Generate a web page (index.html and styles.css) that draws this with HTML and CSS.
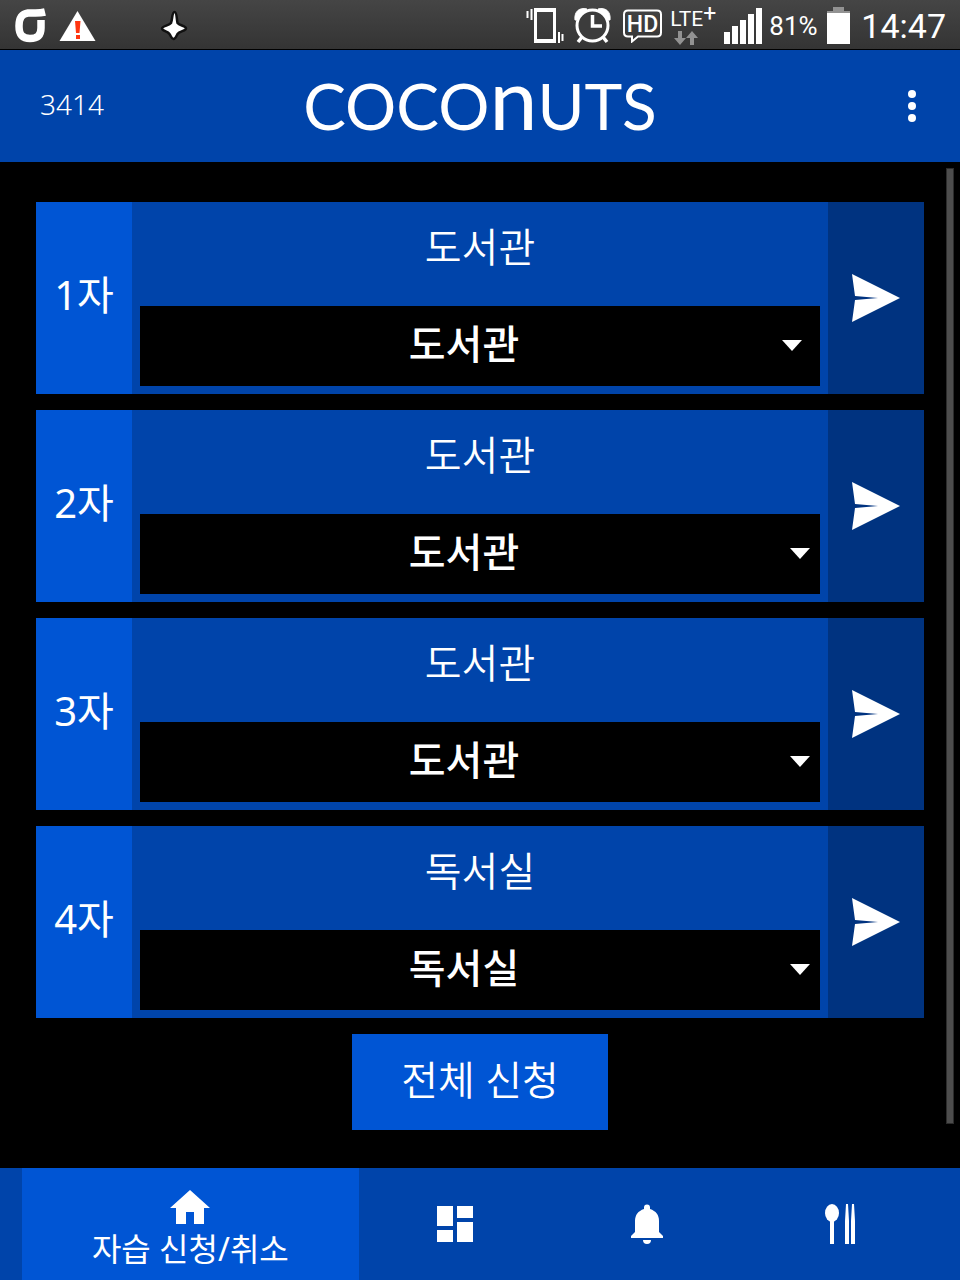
FILE: index.html
```html
<!DOCTYPE html>
<html lang="ko">
<head>
<meta charset="utf-8">
<meta name="viewport" content="width=device-width, initial-scale=1">
<title>Coconuts</title>
<link rel="stylesheet" href="styles.css">
</head>
<body>
<div class="status">
  <div class="status-left">
    <svg width="32" height="36" viewBox="0 0 32 36" aria-hidden="true"><path d="M31 4C23 6 18 4.500 14 5C7.500 6 5 10 5 18C5 27 8.500 30.500 16 30.500C23.500 30.500 27 27 27 20V12" fill="none" stroke="#fff" stroke-width="7.500"/></svg>
    <svg width="37" height="32" viewBox="0 0 37 32" aria-hidden="true"><path d="M18.500 1L36.500 31H0.500Z" fill="#fff"/><path d="M16 11h5.500l-1 12h-3.500zM17 25h4v4h-4z" fill="#ff3510"/></svg>
    <svg class="spark" width="28" height="32" viewBox="0 0 28 32" aria-hidden="true"><path d="M14.500 2C17 2 16.500 9 17.500 13C19.500 15.500 26 16 26 18.500C26 21 19.500 21 17.500 24C16.500 26 15.500 29 13.500 29C11.500 29 11 26 9.500 24C7.500 21 2 21 2 18.500C2 16 9 15.500 11 13C12.500 9 12 2 14.500 2Z" fill="#fff" stroke="#111" stroke-width="2.500"/></svg>
  </div>
  <div class="status-right">
    <svg width="38" height="36" viewBox="0 0 38 36" aria-hidden="true"><path d="M1.500 3v7M5.500 1v11M33 24v11M36.500 26v7" stroke="#fff" stroke-width="2"/><path d="M8 0h22v35H8zM11 4v27h16V4z" fill="#fff" fill-rule="evenodd"/></svg>
    <svg class="alarm" width="37" height="37" viewBox="0 0 37 37" aria-hidden="true"><path d="M1 13C0 5 5 0 13 2L3 13zM36 13C37 5 32 0 24 2L34 13z" fill="#fff" stroke="#fff"/><circle cx="18.500" cy="18.500" r="15.500" fill="#3c3c3c" stroke="#fff" stroke-width="3"/><path d="M18.500 8v11h9.500M8 30l-4 5M29 30l4 5" fill="none" stroke="#fff" stroke-width="3.500"/></svg>
    <svg class="hd" width="39" height="34" viewBox="0 0 39 34" aria-hidden="true"><path d="M5 1.500h29q4 0 4 4v18q0 4-4 4H15l-6 5v-5H5q-4 0-4-4v-18q0-4 4-4z" fill="none" stroke="#fff" stroke-width="2"/><text class="hd-text" x="19.500" y="23" text-anchor="middle">HD</text></svg>
    <div class="lte"><span class="lte-name">LTE<sup>+</sup></span><svg width="24" height="14" viewBox="0 0 24 14" aria-hidden="true"><path d="M4 0h4v7h4l-6 7-6-7h4zM16 14h4V7h4l-6-7-6 7h4z" fill="#929292"/></svg></div>
    <svg class="signal" width="38" height="36" viewBox="0 0 38 36" aria-hidden="true"><path d="M0 24h6v12H0zM8 18h6v18H8zM16 12h6v24h-6zM24 6h6v30h-6zM32 0h6v36h-6z" fill="#fff"/></svg>
    <span class="percent">81%</span>
    <svg width="23" height="37" viewBox="0 0 23 37" aria-hidden="true"><path d="M6 0h11v4h6v3H0V4h6z" fill="#929292"/><path d="M0 6h23v31H0z" fill="#fff"/></svg>
    <time class="clock">14:47</time>
  </div>
</div>
<header class="header">
  <span class="student">3414</span>
  <h1 class="logo">COCO<span class="logo-n">n</span>UTS</h1>
  <button class="more" type="button" aria-label="메뉴"><svg width="8" height="32" viewBox="0 0 8 32"><g fill="#fff"><circle cx="4" cy="4" r="4"/><circle cx="4" cy="16" r="4"/><circle cx="4" cy="28" r="4"/></g></svg></button>
</header>
<main class="main">
  <section class="row">
    <label class="period" for="p1">1자</label>
    <div class="detail"><p class="current">도서관</p><div class="picker"><select id="p1"><option>도서관</option><option>독서실</option></select><svg class="caret caret-inset" width="20" height="11" viewBox="0 0 20 11"><path d="M0 0h20L10 11z" fill="#fff"/></svg></div></div>
    <button class="send" type="button" aria-label="1자 신청"><svg width="48" height="48" viewBox="0 0 48 48"><path d="M0 0L48 24L0 48L3 26L26 24L3 22Z" fill="#fff"/></svg></button>
  </section>
  <section class="row">
    <label class="period" for="p2">2자</label>
    <div class="detail"><p class="current">도서관</p><div class="picker"><select id="p2"><option>도서관</option><option>독서실</option></select><svg class="caret" width="20" height="11" viewBox="0 0 20 11"><path d="M0 0h20L10 11z" fill="#fff"/></svg></div></div>
    <button class="send" type="button" aria-label="2자 신청"><svg width="48" height="48" viewBox="0 0 48 48"><path d="M0 0L48 24L0 48L3 26L26 24L3 22Z" fill="#fff"/></svg></button>
  </section>
  <section class="row">
    <label class="period" for="p3">3자</label>
    <div class="detail"><p class="current">도서관</p><div class="picker"><select id="p3"><option>도서관</option><option>독서실</option></select><svg class="caret" width="20" height="11" viewBox="0 0 20 11"><path d="M0 0h20L10 11z" fill="#fff"/></svg></div></div>
    <button class="send" type="button" aria-label="3자 신청"><svg width="48" height="48" viewBox="0 0 48 48"><path d="M0 0L48 24L0 48L3 26L26 24L3 22Z" fill="#fff"/></svg></button>
  </section>
  <section class="row">
    <label class="period" for="p4">4자</label>
    <div class="detail"><p class="current">독서실</p><div class="picker"><select id="p4"><option>독서실</option><option>도서관</option></select><svg class="caret" width="20" height="11" viewBox="0 0 20 11"><path d="M0 0h20L10 11z" fill="#fff"/></svg></div></div>
    <button class="send" type="button" aria-label="4자 신청"><svg width="48" height="48" viewBox="0 0 48 48"><path d="M0 0L48 24L0 48L3 26L26 24L3 22Z" fill="#fff"/></svg></button>
  </section>
  <button class="apply-all" type="button">전체 신청</button>
  <div class="scrollbar"></div>
</main>
<nav class="tabs">
  <a class="tab tab-active" href="#apply"><svg width="40" height="34" viewBox="0 0 40 34" aria-hidden="true"><path d="M20 0L40 18H34V34H24V22H16V34H6V18H0Z" fill="#fff"/></svg><span>자습 신청/취소</span></a>
  <a class="tab" href="#board" aria-label="게시판"><svg width="36" height="36" viewBox="0 0 36 36"><path d="M0 0h16v20H0zM20 0h16v12H20zM0 24h16v12H0zM20 16h16v20H20z" fill="#fff"/></svg></a>
  <a class="tab" href="#alerts" aria-label="알림"><svg width="32" height="40" viewBox="0 0 32 40"><path d="M13 5V3.500a3 3 0 0 1 6 0V5C25 7 28 11 28 17V28L32 32V34H0V32L4 28V17C4 11 7 7 13 5ZM12 36h8a4 4 0 0 1-8 0z" fill="#fff"/></svg></a>
  <a class="tab" href="#meals" aria-label="급식"><svg width="30" height="40" viewBox="0 0 30 40"><ellipse cx="7" cy="9" rx="7" ry="9" fill="#fff"/><path d="M5 16h4v24H5zM21 0h2l1 17v23h-4V17zM27 0h2l1 17v23h-4V17z" fill="#fff"/></svg></a>
</nav>
</body>
</html>
```
FILE: styles.css
```css
* { box-sizing: border-box; }
body {
  margin: 0;
  min-height: 100vh;
  display: flex;
  flex-direction: column;
  background: #000;
  color: #fff;
  font-family: "Noto Sans", "Noto Sans CJK KR", sans-serif;
}
svg { display: block; flex: none; }
button { border: 0; padding: 0; color: inherit; font: inherit; cursor: pointer; }

.status {
  height: 50px;
  display: flex;
  justify-content: space-between;
  padding: 2px 14px 0;
  background: linear-gradient(#454545, #343434);
  border-bottom: 1px solid #000;
  font-family: Roboto, sans-serif;
}
.status-left, .status-right { display: flex; align-items: center; }
.status-left { gap: 13px; }
.spark { margin-left: 51px; }
.alarm { margin-left: 10px; }
.hd { margin-left: 12px; }
.hd-text { font: 500 23px Roboto, sans-serif; fill: #fff; }
.lte { margin-left: 8px; width: 48px; }
.lte svg { margin-left: 4px; }
.lte-name { display: block; font-size: 21px; line-height: 24px; white-space: nowrap; }
.lte-name sup { font-size: 23px; line-height: 0; vertical-align: 5px; }
.signal { margin: 0 7px 0 6px; }
.percent { width: 58px; font-size: 26px; }
.clock { margin-left: 11px; font-size: 34px; }

.header {
  height: 112px;
  display: grid;
  grid-template-columns: 1fr auto 1fr;
  align-items: center;
  padding: 0 40px;
  background: #0044aa;
}
.student { padding-bottom: 4px; font-size: 28px; font-weight: 300; }
.logo {
  margin: 0;
  font-family: Lato, sans-serif;
  font-size: 64px;
  font-weight: 400;
  line-height: 80px;
}
.logo-n { font-size: 86px; line-height: 0; }
.more { justify-self: end; background: none; padding: 8px 4px; }

.main {
  flex: 1;
  position: relative;
  display: flex;
  flex-direction: column;
  gap: 16px;
  padding: 40px 36px 38px;
}
.row { display: grid; grid-template-columns: 96px 1fr 96px; }
.period {
  display: flex;
  align-items: center;
  justify-content: center;
  padding-bottom: 10px;
  background: #0055d4;
  font-size: 40px;
}
.detail { padding: 0 8px 8px; background: #0044aa; }
.current {
  margin: 0;
  padding-bottom: 14px;
  font-size: 40px;
  font-weight: 350;
  line-height: 90px;
  text-align: center;
}
.picker { position: relative; }
.picker select {
  display: block;
  width: 100%;
  height: 80px;
  padding: 0 32px 6px 0;
  border: 0;
  border-radius: 0;
  appearance: none;
  background: #000;
  color: #fff;
  font: 500 40px "Noto Sans", "Noto Sans CJK KR", sans-serif;
  text-align: center;
  text-align-last: center;
}
.caret { position: absolute; right: 10px; top: 34px; pointer-events: none; }
.caret-inset { right: 18px; }
.send { display: flex; align-items: center; justify-content: center; background: #003380; }
.apply-all {
  align-self: center;
  width: 256px;
  height: 96px;
  padding-bottom: 8px;
  background: #0055d4;
  font-size: 40px;
  font-weight: 350;
}
.scrollbar {
  position: absolute;
  top: 6px;
  right: 6px;
  bottom: 44px;
  width: 8px;
  background: #4d4d4d;
  border: 1px solid #2c2c2c;
}

.tabs {
  min-height: 112px;
  display: grid;
  grid-template-columns: 7fr 4fr 4fr 4fr;
  padding: 0 24px 0 22px;
  background: #0044aa;
}
.tab {
  display: flex;
  flex-direction: column;
  align-items: center;
  justify-content: center;
  color: #fff;
  text-decoration: none;
  font-size: 32px;
  line-height: 50px;
}
.tab-active { padding-top: 16px; background: #0055d4; }
```
